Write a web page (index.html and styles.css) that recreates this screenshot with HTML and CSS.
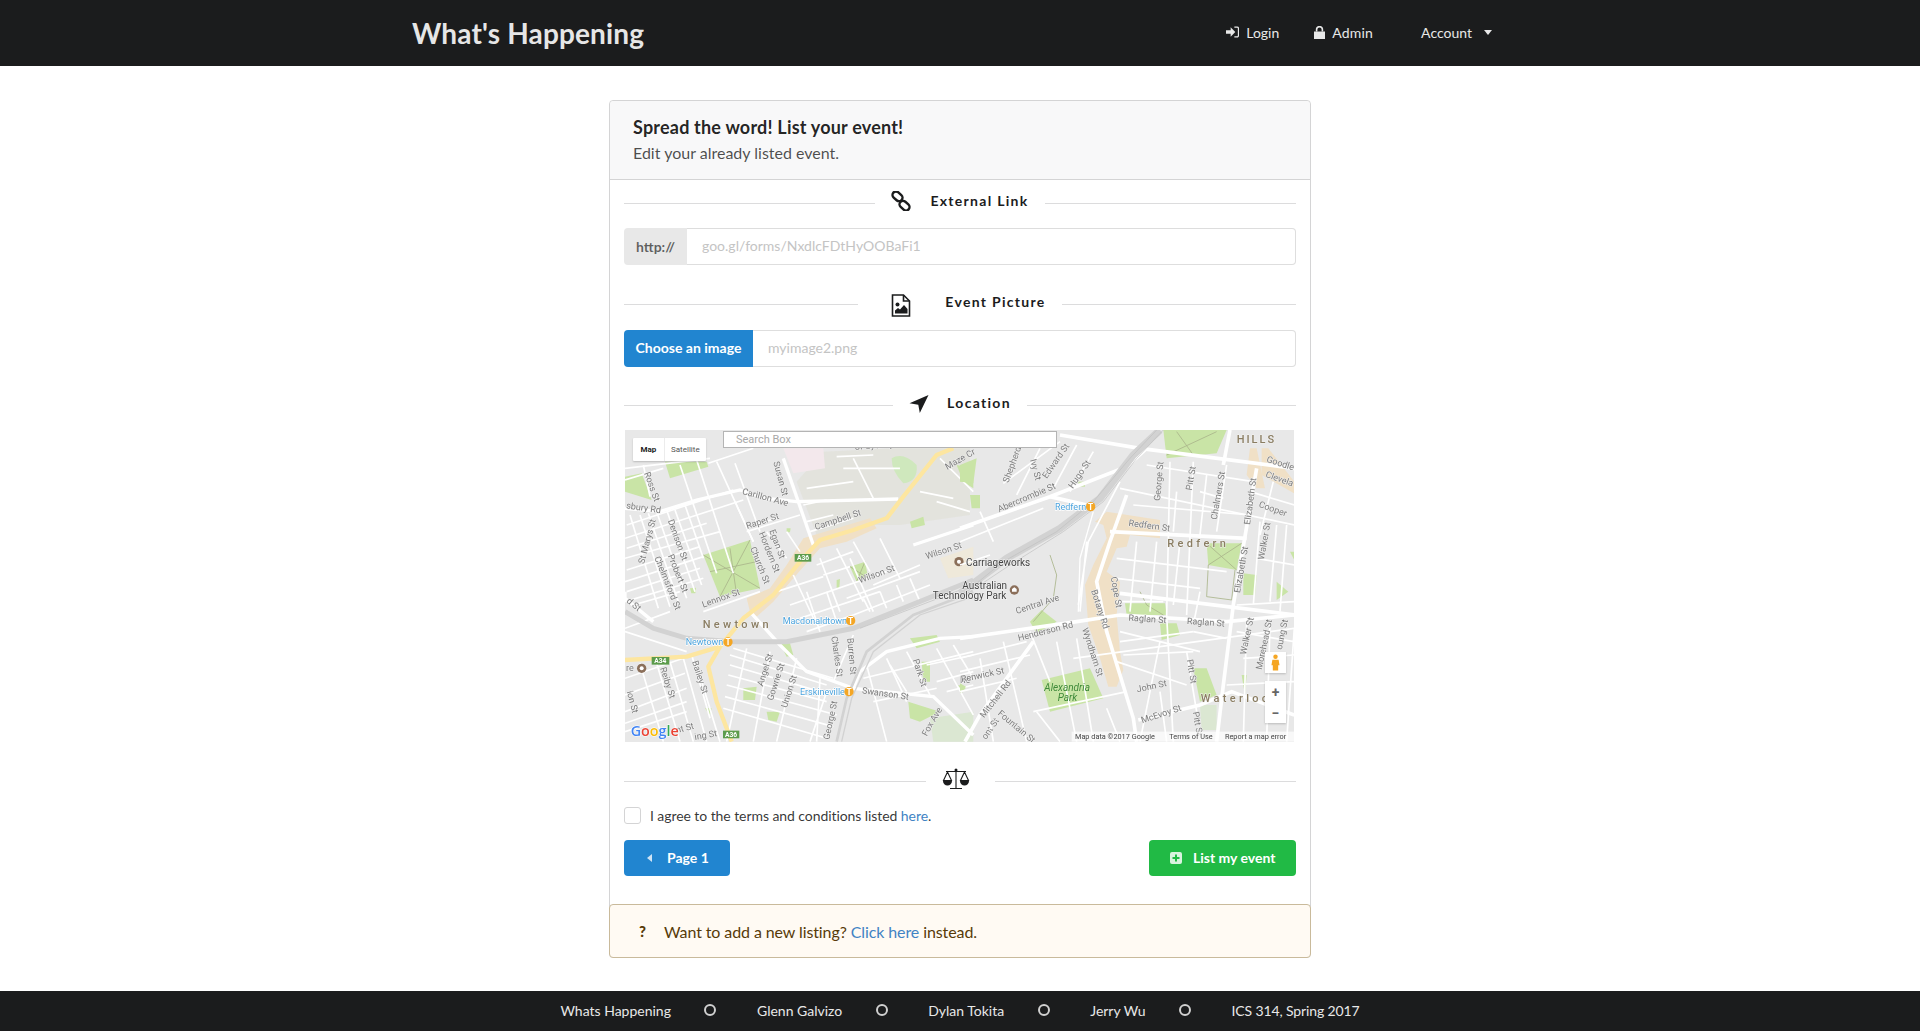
FILE: index.html
```html
<!DOCTYPE html>
<html lang="en">
<head>
    <meta charset="UTF-8">
    <title>What's Happening</title>
    <link rel="stylesheet" href="styles.css">
</head>
<body>
<header class="topbar">
    <a class="brand">What's Happening</a>
    <nav class="topnav">
        <a class="nav-item nav-login">
            <svg class="nav-icon" viewBox="0 0 14 12"><path d="M0 4h5V1l5 5-5 5V8H0z"/><path d="M9 .7h3a1.4 1.4 0 0 1 1.4 1.4v7.8A1.4 1.4 0 0 1 12 11.3H9" fill="none" stroke="currentColor" stroke-width="1.3"/></svg>
            Login
        </a>
        <a class="nav-item nav-admin">
            <svg class="nav-icon lock" viewBox="0 0 11 13"><path d="M0 5.5h11V13H0z"/><path d="M2.6 5.5V3.6a2.9 2.9 0 0 1 5.8 0v1.9" fill="none" stroke="currentColor" stroke-width="1.6"/></svg>
            Admin
        </a>
        <a class="nav-item nav-account">
            Account
            <span class="caret"></span>
        </a>
    </nav>
</header>

<main class="page">
    <section class="card">
        <div class="card-head">
            <h3>Spread the word! List your event!</h3>
            <p>Edit your already listed event.</p>
        </div>
        <form class="card-body">
            <div class="divider">
                <span class="divider-label">
                    <svg class="div-icon" viewBox="0 0 20 20"><g fill="none" stroke="#1b1c1d" stroke-width="2.400"><rect x="1" y="1.800" width="11" height="7" rx="3.500" transform="rotate(42 6.500 5.300)"/><rect x="8" y="11.200" width="11" height="7" rx="3.500" transform="rotate(42 13.500 14.700)"/></g></svg>
                    External Link
                </span>
            </div>
            <div class="field-row">
                <span class="field-tag">http://</span>
                <input class="field-input" type="text" placeholder="goo.gl/forms/NxdlcFDtHyOOBaFi1">
            </div>

            <div class="divider divider-picture">
                <span class="divider-label">
                    <svg class="div-icon" viewBox="0 0 19 23"><path d="M1 1h11l6 6v15H1z" fill="#fff" stroke="#1b1c1d" stroke-width="1.6"/><path d="M12 1v6h6" fill="none" stroke="#1b1c1d" stroke-width="1.6"/><circle cx="6" cy="10.500" r="2"/><path d="M3.500 19.500v-3l3-2.500 2 1.500 4-4.500 3.500 4v4.500z"/></svg>
                    Event Picture
                </span>
            </div>
            <div class="field-row field-row-image">
                <button class="file-btn" type="button">Choose an image</button>
                <input class="field-input" type="text" placeholder="myimage2.png">
            </div>

            <div class="divider divider-location">
                <span class="divider-label">
                    <svg class="div-icon" viewBox="0 0 20 20"><path d="M19.500 1 10.800 19 9.300 10.800 .5 9.300z"/></svg>
                    Location
                </span>
            </div>
            <div class="map">
                <svg class="map-canvas" viewBox="0 0 669 312">
                    <rect width="669" height="312" fill="#e8e8e8"/>

                    <!-- west half -->
                    <g transform="translate(-5 -5) scale(.3333)">
                        <g fill="#e3e3dd">
                            <path d="M530 170 610 80 820 70 1050 70V270L840 300 700 300 590 330z"/>
                        </g>
                        <path d="M490 70H610L615 130 520 145z" fill="#f3e8ec"/>
                        <path d="M960 400 1060 365V450L985 460z" fill="#efe9da"/>
                        <path d="M930 880 1060 860V950H940z" fill="#dbe7d2"/>
                        <path d="M815 100Q850 80 890 120 895 170 850 175 815 140 815 100z" fill="#cfe8bd"/>
                        <g fill="#c9e4a6">
                            <path d="M135 110H260L265 125 150 160z"/>
                            <path d="M15 155 65 145 95 225 15 200z"/>
                            <path d="M250 390 390 345 420 490 300 515z"/>
                            <path d="M690 425 735 410 745 460 710 470z"/>
                            <path d="M1010 120 1060 130V190L1030 170z"/>
                            <path d="M870 290 910 275 915 300 875 310z"/>
                            <path d="M370 790 410 785 405 825 370 825z"/>
                            <path d="M865 830 960 860 900 890 870 880z"/>
                            <path d="M440 860H480L470 890 445 885z"/>
                            <path d="M255 850H275L270 870z"/>
                            <path d="M870 640 950 630 960 650 890 670z"/>
                            <path d="M480 655H510L520 690 500 695z"/>
                            <path d="M905 710H930V770H910z"/>
                            <path d="M650 465 660 462 658 490 650 488z"/>
                            <path d="M210 490 228 488 226 505 214 505z"/>
                            <path d="M500 310 512 310 510 322 500 322z"/>
                            <path d="M1015 780 1040 785 1025 805z"/>
                        </g>
                        <g fill="none" stroke="#a9b58a" stroke-width="2.500">
                            <path d="M250 390 420 490M300 515 390 345M270 440 410 410M330 370 350 510"/>
                            <path d="M690 425 745 460M710 470 735 410"/>
                        </g>
                        <path d="M380 520 450 490 500 420 550 340 750 280 770 310 680 350 600 370 520 460 460 530 410 575 390 560z" fill="#f0e0c6"/>

                        <g fill="none" stroke="#fff" stroke-width="5">
                            <path d="M130 130 15 165M270 100 15 130M265 115 400 70M90 215 70 120M180 120 290 445M230 105 340 445M290 110 400 350M345 115 420 320"/>
                            <path d="M15 340 370 225M15 400 300 320M15 470 250 395M15 530 250 460M40 540 180 500M250 560 420 500"/>
                            <path d="M60 270 150 545M110 260 200 520M165 255 245 480M345 230 400 350M400 300 470 280M380 320 540 270"/>
                            <path d="M20 300 340 195M20 370 260 295M20 435 240 365M20 500 240 430M30 270 115 550M85 265 175 530M140 255 225 500M195 240 250 400"/>
                            <path d="M440 320 500 400M500 320 540 380M550 240 620 225M560 290 640 270M570 320 700 280"/>
                            <path d="M510 540 800 440M470 500 610 455M610 450 690 425M680 520 900 440M700 570 930 480M730 520 750 560M780 500 800 550M830 480 850 530"/>
                            <path d="M540 580 780 500M560 620 700 570M760 480 900 420M870 460 900 530M620 500 650 590M560 500 600 620M690 400 760 560"/>
                            <path d="M520 450 590 600M600 400 660 560M650 370 730 530M700 350 750 440M780 340 840 460M590 420 700 380"/>
                            <path d="M15 610 150 560M15 760 190 700M15 860 200 790M15 920 200 860M190 700 260 950M110 715 180 950M340 670 640 760M330 720 600 800M320 780 650 870M310 850 620 940"/>
                            <path d="M60 715 130 950M150 710 220 950M230 720 300 950M15 810 195 745M15 895 200 830M330 690 620 780M325 750 620 830M315 815 640 905"/>
                            <path d="M380 670 320 950M450 680 400 950M530 700 470 950M600 760 590 950M620 800 570 950M700 630 640 770"/>
                            <path d="M730 760 1060 680M760 830 950 790M860 680 930 810M950 670 1060 870M1000 660 1060 760M810 720 860 800"/>
                            <path d="M740 720 800 950M800 700 860 830M920 720 1060 690M950 770 1060 740M980 800 1060 780"/>
                            <path d="M670 130 840 130M560 190 700 170M700 100 760 220M900 200 1000 220M650 95 760 90M960 100 1060 200M950 230 1050 260"/>
                            <path d="M15 620 200 680M215 690 270 880"/>
                        </g>
                        <g fill="none" stroke="#fff" stroke-width="10">
                            <path d="M835 222 530 230 440 220 360 195 230 225 120 260 15 250"/>
                            <path d="M490 100 580 360"/>
                            <path d="M390 560 480 660 560 740 700 790 940 815 1060 930"/>
                            <path d="M1060 635 960 640 800 680 720 740 700 790"/>
                            <path d="M880 360 1060 300"/>
                            <path d="M15 500 15 520 100 590"/>
                        </g>
                        <g fill="none" stroke="#d2d2d2">
                            <path d="M15 560 100 610 200 640 340 650 500 650 700 610 1060 465" stroke-width="15"/>
                            <path d="M650 950 680 820 740 680 880 570 1060 500" stroke-width="8"/>
                            <path d="M665 950 695 820 760 680 900 570 1060 515" stroke-width="4"/>
                            <path d="M720 610 1060 480" stroke="#c0c0c0" stroke-width="2"/>
                        </g>
                        <g fill="none" stroke="#fde6a0" stroke-width="13" stroke-linejoin="round">
                            <path d="M1000 70 950 90 850 215 800 280 700 315 600 345 540 410 460 510 370 580 300 665 200 695 15 705"/>
                            <path d="M300 665 265 725 290 830 335 950"/>
                        </g>

                        <g class="st">
                            <text transform="translate(72 145) rotate(70)">Ross St</text>
                            <text transform="translate(365 207) rotate(15)">Carillon Ave</text>
                            <text transform="translate(460 112) rotate(75)">Susan St</text>
                            <text transform="translate(18 250) rotate(8)">sbury Rd</text>
                            <text transform="translate(72 418) rotate(-75)">St Marys St</text>
                            <text transform="translate(143 287) rotate(70)">Denison St</text>
                            <text transform="translate(143 392) rotate(68)">Probert St</text>
                            <text transform="translate(103 398) rotate(68)">Chelmsford St</text>
                            <text transform="translate(382 312) rotate(-18)">Raper St</text>
                            <text transform="translate(416 325) rotate(68)">Hordern St</text>
                            <text transform="translate(448 317) rotate(70)">Egan St</text>
                            <text transform="translate(390 370) rotate(68)">Church St</text>
                            <text transform="translate(587 315) rotate(-18)">Campbell St</text>
                            <text transform="translate(720 475) rotate(-20)">Wilson St</text>
                            <text transform="translate(920 403) rotate(-18)">Wilson St</text>
                            <text transform="translate(250 548) rotate(-20)">Lennox St</text>
                            <text transform="translate(725 805) rotate(8)">Swanson St</text>
                            <text transform="translate(120 730) rotate(72)">Reiby St</text>
                            <text transform="translate(216 710) rotate(72)">Bailey St</text>
                            <text transform="translate(428 785) rotate(-72)">Angel St</text>
                            <text transform="translate(458 828) rotate(-72)">Gowrie St</text>
                            <text transform="translate(500 850) rotate(-72)">Union St</text>
                            <text transform="translate(634 635) rotate(82)">Charles St</text>
                            <text transform="translate(682 640) rotate(85)">Burren St</text>
                            <text transform="translate(628 945) rotate(-78)">George St</text>
                            <text transform="translate(878 705) rotate(72)">Park St</text>
                            <text transform="translate(920 935) rotate(-60)">Fox Ave</text>
                            <text transform="translate(982 135) rotate(-30)">Maze Cr</text>
                            <text transform="translate(18 530) rotate(40)">d St</text>
                            <text transform="translate(20 800) rotate(75)">ion St</text>
                            <text transform="translate(170 925) rotate(-15)">nt St</text>
                            <text transform="translate(225 945) rotate(-10)">ing St</text>
                            <text transform="translate(705 75) rotate(-5)">of Sydney</text>
                            <text transform="translate(1020 775)">Re</text>
                            <text x="18" y="738" class="poi-text">re</text>
                        </g>
                        <text x="248" y="608" class="area">Newtown</text>
                        <text x="488" y="596" class="station">Macdonaldtown</text>
                        <text x="197" y="660" class="station">Newtown</text>
                        <text x="540" y="809" class="station">Erskineville</text>
                        <g class="tstop"><circle cx="692" cy="587" r="14"/><text x="692" y="596">T</text></g>
                        <g class="tstop"><circle cx="324" cy="651" r="14"/><text x="324" y="660">T</text></g>
                        <g class="tstop"><circle cx="687" cy="800" r="14"/><text x="687" y="809">T</text></g>
                        <g class="shield"><rect x="524" y="387" width="50" height="23"/><text x="549" y="405">A36</text></g>
                        <g class="shield"><rect x="95" y="696" width="53" height="23"/><text x="121" y="714">A34</text></g>
                        <g class="shield"><rect x="309" y="917" width="49" height="23"/><text x="333" y="935">A36</text></g>
                        <circle cx="65" cy="730" r="14" fill="#8b6f5a"/><circle cx="65" cy="730" r="6" fill="#fff"/>
                        <circle cx="1017" cy="410" r="14" fill="#8b6f5a"/><circle cx="1017" cy="410" r="6" fill="#fff"/>
                        <text x="32" y="933" class="glogo"><tspan fill="#4285f4">G</tspan><tspan fill="#ea4335">o</tspan><tspan fill="#fbbc05">o</tspan><tspan fill="#4285f4">g</tspan><tspan fill="#34a853">l</tspan><tspan fill="#ea4335">e</tspan></text>
                    </g>

                    <!-- east half -->
                    <g transform="translate(335 -5) scale(.3333)">
                        <path d="M720 840H770V915H725z" fill="#dbe7d2"/>
                        <g fill="#c9e4a6">
                            <path d="M610 15H800L770 85 620 100z"/>
                            <path d="M740 355H845L830 435 745 420z"/>
                            <path d="M850 445 890 450 885 510H850z"/>
                            <path d="M495 535H615L620 570 500 570z"/>
                            <path d="M600 595H650L660 630 605 645z"/>
                            <path d="M245 765 390 730 430 820 270 860z"/>
                            <path d="M210 590 245 555 290 590 230 625z"/>
                            <path d="M700 730H740L770 810 720 830z"/>
                            <path d="M950 470 985 500 950 525z"/>
                            <path d="M990 380H1003V405z"/>
                            <path d="M845 750H860L855 810z"/>
                            <path d="M30 210H60V250H35z"/>
                            <path d="M0 120 50 100 40 175 0 170z"/>
                            <path d="M0 775 18 785 0 805z"/>
                            <path d="M355 170H375V185H355z"/>
                        </g>
                        <g fill="none" stroke="#a9b58a" stroke-width="2.500">
                            <path d="M740 355 830 435M845 355 745 420M745 420 740 515 815 525 825 435"/>
                            <path d="M620 90 770 20M650 20 700 90M270 390 290 450 280 520 220 590"/>
                            <path d="M540 500 560 540 610 570"/>
                        </g>
                        <g fill="#f0e0c6">
                            <path d="M405 290 440 260 600 285 600 340 510 330 500 365 470 370 440 440 480 470 470 570 480 680 490 735 470 785 445 785 420 700 385 600 375 480 400 420 440 340 430 300z"/>
                            <path d="M870 70H890L915 190H890L860 150z"/>
                            <path d="M905 70H925L1003 170V205L905 150z"/>
                        </g>
                        <g fill="none" stroke="#fff" stroke-width="5">
                            <path d="M300 50 130 175M240 70 170 210M350 60 280 190M400 80 330 200"/>
                            <path d="M0 350 250 250M0 420 90 390M60 260 100 350"/>
                            <path d="M630 110 620 570 640 950M700 110 680 570M800 120 770 320M870 200 1003 240M560 120 880 170M480 190 1003 300"/>
                            <path d="M520 240 870 270M650 200 640 320M740 150 720 330M940 170 900 330M980 300 960 560M470 530 610 530"/>
                            <path d="M470 400 800 440M470 460 720 490M480 620 720 680M490 690 700 680M700 620 800 640M470 710 680 780M340 700 1003 610"/>
                            <path d="M530 350 510 560M590 350 570 560M660 350 640 540M720 500 700 600M480 650 700 620"/>
                            <path d="M0 700 200 650M0 800 170 760M130 650 200 950M290 650 350 950M350 640 400 950M60 700 100 950M220 860 500 800"/>
                            <path d="M0 740 210 690M210 620 270 770M230 860 300 950M440 850 480 950M600 800 620 950M680 680 710 860"/>
                            <path d="M860 590 850 950M930 600 920 950M1003 610 980 950M830 620 1003 650M850 700 1003 690M800 780 1003 770M540 950 600 650M380 350 360 560M355 540 385 350 480 170"/>
                            <path d="M720 200 790 220M950 300 930 530M900 290 880 540M890 400 1003 420M830 540 1003 530"/>
                        </g>
                        <g fill="none" stroke="#fff" stroke-width="11">
                            <path d="M300 30 540 70 1003 130"/>
                            <path d="M0 310 270 215 500 125 560 70"/>
                            <path d="M270 215 400 245"/>
                            <path d="M500 210 450 350 410 470 440 620 520 880 530 950"/>
                            <path d="M890 130 820 540 790 780 770 950"/>
                            <path d="M0 640 350 590 480 570 800 590 1003 570"/>
                            <path d="M220 650 60 870 15 950"/>
                            <path d="M480 505 1003 570"/>
                            <path d="M535 885 720 840 815 800 1003 870"/>
                            <path d="M450 320 860 340"/>
                            <path d="M810 15 790 120"/>
                        </g>
                        <g fill="none" stroke="#d2d2d2">
                            <path d="M600 15 520 90 420 220 300 310 140 400 0 505" stroke-width="22"/>
                            <path d="M590 15 510 100 400 230 290 320 130 410 0 515" stroke="#c0c0c0" stroke-width="2"/>
                            <path d="M610 15 530 100 430 230 310 320 150 420 0 520" stroke="#c0c0c0" stroke-width="2"/>
                            <path d="M400 260 360 400 355 560" stroke="#fff" stroke-width="4"/>
                        </g>
                        <g class="st">
                            <text transform="translate(918 110) rotate(18)">Goodle</text>
                            <text transform="translate(915 155) rotate(20)">Clevela</text>
                            <text transform="translate(895 245) rotate(20)">Cooper</text>
                            <text transform="translate(870 300) rotate(-82)">Elizabeth St</text>
                            <text transform="translate(770 285) rotate(-80)">Chalmers St</text>
                            <text transform="translate(695 197) rotate(-80)">Pitt St</text>
                            <text transform="translate(600 228) rotate(-85)">George St</text>
                            <text transform="translate(145 175) rotate(-70)">Shepherd</text>
                            <text transform="translate(210 105) rotate(75)">Ivy St</text>
                            <text transform="translate(260 162) rotate(-55)">Edward St</text>
                            <text transform="translate(338 192) rotate(-55)">Hugo St</text>
                            <text transform="translate(118 262) rotate(-23)">Abercrombie St</text>
                            <text transform="translate(505 302) rotate(8)">Redfern St</text>
                            <text transform="translate(912 405) rotate(-80)">Walker St</text>
                            <text transform="translate(840 505) rotate(-80)">Elizabeth St</text>
                            <text transform="translate(452 457) rotate(80)">Cope St</text>
                            <text transform="translate(393 497) rotate(72)">Botany Rd</text>
                            <text transform="translate(366 612) rotate(72)">Wyndham St</text>
                            <text transform="translate(170 567) rotate(-18)">Central Ave</text>
                            <text transform="translate(176 648) rotate(-14)">Henderson Rd</text>
                            <text transform="translate(505 587) rotate(4)">Raglan St</text>
                            <text transform="translate(680 597) rotate(4)">Raglan St</text>
                            <text transform="translate(858 690) rotate(-78)">Walker St</text>
                            <text transform="translate(905 735) rotate(-78)">Morehead St</text>
                            <text transform="translate(965 675) rotate(-78)">oung St</text>
                            <text transform="translate(680 705) rotate(80)">Pitt St</text>
                            <text transform="translate(698 862) rotate(80)">Pitt St</text>
                            <text transform="translate(5 772) rotate(-12)">Renwick St</text>
                            <text transform="translate(72 880) rotate(-52)">Mitchell Rd</text>
                            <text transform="translate(112 868) rotate(40)">Fountain St</text>
                            <text transform="translate(78 945) rotate(-55)">ont St</text>
                            <text transform="translate(532 802) rotate(-12)">John St</text>
                            <text transform="translate(547 895) rotate(-18)">McEvoy St</text>
                        </g>
                        <text x="830" y="53" class="area area-small">HILLS</text>
                        <text x="622" y="367" class="area">Redfern</text>
                        <text x="722" y="831" class="area">Waterloo</text>
                        <text x="285" y="254" class="station">Redfern</text>
                        <g class="tstop"><circle cx="392" cy="245" r="14"/><text x="392" y="254">T</text></g>
                        <text x="18" y="422" class="poi">Carriageworks</text>
                        <text x="7" y="492" class="poi">Australian</text>
                        <text x="-82" y="523" class="poi">Technology Park</text>
                        <circle cx="163" cy="495" r="14" fill="#8b6f5a"/><path d="M156 500v-8l7-5 7 5v8z" fill="#fff"/>
                        <text x="253" y="798" class="park">Alexandria</text>
                        <text x="293" y="828" class="park">Park</text>
                        <rect x="335" y="920" width="668" height="30" fill="#fff" opacity=".7"/>
                        <g class="attr">
                            <text x="345" y="941">Map data ©2017 Google</text>
                            <text x="628" y="941">Terms of Use</text>
                            <text x="795" y="941">Report a map error</text>
                        </g>
                    </g>
                </svg>
                <input class="map-search" type="text" placeholder="Search Box">
                <div class="map-type">
                    <span class="map-type-on">Map</span>
                    <span>Satellite</span>
                </div>
                <div class="pegman">
                    <svg viewBox="0 0 10 19" width="9" height="17"><circle cx="5" cy="3" r="2.500" fill="#f5a623"/><path d="M1.500 6.500h7l1 6H8v6H2v-6H.5z" fill="#f5a623"/></svg>
                </div>
                <div class="zoom-ctl">
                    <span>+</span>
                    <span>−</span>
                </div>
            </div>

            <div class="divider divider-terms">
                <span class="divider-label">
                    <svg class="div-icon" viewBox="0 0 28 22"><g fill="none" stroke="#1b1c1d" stroke-width="1.100"><path d="M14 2.500V20M8 20.500h12M4 3.500h20"/><path d="M5.500 4 1.500 12.500h8zM22.500 4l-4 8.500h8z"/></g><circle cx="14" cy="2" r="1.500" fill="#1b1c1d"/><path d="M1 13h9a4.500 4.500 0 0 1-9 0zM18 13h9a4.500 4.500 0 0 1-9 0z" fill="#1b1c1d"/></svg>
                </span>
            </div>
            <label class="terms">
                <span class="check-box"></span>
                <span>I agree to the terms and conditions listed <a class="link">here</a>.</span>
            </label>
            <div class="actions">
                <button class="btn btn-blue" type="button"><span class="caret-left"></span>Page 1</button>
                <button class="btn btn-green" type="button">
                    <svg class="plus-icon" viewBox="0 0 12 12"><path fill-rule="evenodd" d="M2 0h8a2 2 0 0 1 2 2v8a2 2 0 0 1-2 2H2a2 2 0 0 1-2-2V2a2 2 0 0 1 2-2zM5 2.500V5H2.500v2H5v2.500h2V7h2.500V5H7V2.500z"/></svg>
                    List my event
                </button>
            </div>
        </form>
        <div class="notice">
            <span class="notice-mark">?</span>
            <span>Want to add a new listing? <a class="link">Click here</a> instead.</span>
        </div>
    </section>
</main>

<footer class="foot">
    <span>Whats Happening</span>
    <i class="ring"></i>
    <span>Glenn Galvizo</span>
    <i class="ring"></i>
    <span>Dylan Tokita</span>
    <i class="ring"></i>
    <span>Jerry Wu</span>
    <i class="ring"></i>
    <span class="foot-last">ICS 314, Spring 2017</span>
</footer>
</body>
</html>
```

FILE: styles.css
```css
/* page */
body {
    margin: 0;
    font-family: Lato, "Liberation Sans", sans-serif;
    font-size: 14px;
    color: rgba(0, 0, 0, .87);
    background: #fff;
    height: 1031px;
    display: flex;
    flex-direction: column;
    overflow: hidden;
}

/* top bar */
.topbar {
    height: 66px;
    background: #1b1c1d;
    display: flex;
    align-items: center;
    padding-left: 412px;
    flex: none;
}

.brand {
    font-size: 28px;
    font-weight: 700;
    letter-spacing: .15px;
    color: #e6e6e6;
}

.topnav {
    display: flex;
    align-items: center;
    margin-left: auto;
    padding: 0 428px 2px 0;
    color: #e8e8e8;
}

.nav-item {
    display: flex;
    align-items: center;
}

.nav-login { margin-right: 35px; }
.nav-admin { margin-right: 48px; letter-spacing: .2px; }

.nav-icon {
    width: 13px;
    height: 12px;
    fill: currentColor;
    margin-right: 7px;
}

.nav-icon.lock {
    width: 11px;
    height: 13px;
}

.caret {
    width: 0;
    height: 0;
    border-left: 4.5px solid transparent;
    border-right: 4.5px solid transparent;
    border-top: 5px solid #e8e8e8;
    margin-left: 12px;
}

/* card */
.page {
    flex: 1;
    padding-top: 34px;
}

.card {
    width: 700px;
    margin: 0 auto;
    border: 1px solid #d4d4d5;
    border-radius: 4px;
}

.card-head {
    height: 79px;
    box-sizing: border-box;
    padding: 14px 23px 0;
    background: #f8f8f9;
    border-bottom: 1px solid #d4d4d5;
    border-radius: 4px 4px 0 0;
}

.card-head h3 {
    margin: 0;
    font-size: 18px;
    line-height: 25px;
    font-weight: 700;
    letter-spacing: .2px;
}

.card-head p {
    margin: 2px 0 0;
    font-size: 16px;
    line-height: 22px;
    color: rgba(0, 0, 0, .7);
}

.card-body {
    padding: 8px 14px 0;
}

/* dividers */
.divider {
    display: flex;
    align-items: center;
    height: 24px;
    font-weight: 700;
    letter-spacing: 1.3px;
}

.divider::before,
.divider::after {
    content: "";
    flex: 1;
    height: 0;
    border-top: 1px solid #dcdcdd;
    margin-top: 6px;
}

.divider-label {
    display: flex;
    align-items: center;
    padding: 0 16px;
    color: #1b1c1d;
}

.div-icon {
    width: 20px;
    height: 20px;
    margin-right: 19px;
    fill: #1b1c1d;
    transform: translateY(1px);
}

.divider-picture {
    margin-top: 24px;
}

.divider-picture .div-icon {
    height: 23px;
    margin: 0 34px 0 17px;
    transform: translateY(4px);
}

.divider-location {
    margin-top: 23px;
}

.divider-location .div-icon {
    margin-right: 18px;
    transform: translateY(2px);
}

.divider-terms {
    margin-top: 24px;
}

.divider-terms .div-icon {
    width: 28px;
    height: 22px;
    margin: 0 9px 0 0;
    transform: translateY(1px);
}

/* inputs */
.field-row {
    display: flex;
    height: 37px;
    margin-top: 16px;
}

.field-row-image {
    margin-top: 17px;
}

.field-tag {
    width: 63px;
    display: flex;
    align-items: center;
    justify-content: center;
    background: #e8e8e8;
    color: rgba(0, 0, 0, .6);
    font-weight: 700;
    border-radius: 4px 0 0 4px;
}

.field-input {
    flex: 1;
    min-width: 0;
    padding: 0 15px 2px;
    border: 1px solid rgba(34, 36, 38, .15);
    border-left: none;
    border-radius: 0 4px 4px 0;
    font: 14px Lato, sans-serif;
}

.field-input::placeholder {
    color: #c4c4c4;
    opacity: 1;
}

.file-btn {
    width: 129px;
    border: none;
    background: #2185d0;
    color: #fff;
    font: 700 14px Lato, sans-serif;
    border-radius: 4px 0 0 4px;
    padding: 0 0 2px;
}

/* map */
.map {
    position: relative;
    width: 669px;
    height: 312px;
    margin: 16px 0 0 1px;
    overflow: hidden;
}

.map-canvas {
    display: block;
    width: 669px;
    height: 312px;
    filter: blur(.45px);
}

.st text {
    font: 27px Roboto, sans-serif;
    fill: #7d7d7d;
    stroke: #f0f0f0;
    stroke-width: 3px;
    paint-order: stroke;
}

.area {
    font: 500 33px Roboto, sans-serif;
    letter-spacing: 10px;
    fill: #8a7d62;
    stroke: #f2f2f2;
    stroke-width: 3px;
    paint-order: stroke;
}

.area-small {
    letter-spacing: 6px;
}

.station {
    font: 27px Roboto, sans-serif;
    fill: #4ba3dd;
    stroke: #fff;
    stroke-width: 4px;
    paint-order: stroke;
}

.tstop circle {
    fill: #f4a625;
}

.tstop text {
    font: 700 25px Roboto, sans-serif;
    fill: #fff;
    text-anchor: middle;
}

.shield rect {
    fill: #5c9c4c;
}

.shield text {
    font: 700 20px Roboto, sans-serif;
    fill: #fff;
    text-anchor: middle;
}

.poi {
    font: 30px Roboto, sans-serif;
    fill: #444;
    stroke: #f2f2f2;
    stroke-width: 3px;
    paint-order: stroke;
}

.park {
    font: italic 30px Roboto, sans-serif;
    fill: #3f8a3a;
}

.attr text {
    font: 22px Roboto, sans-serif;
    fill: #444;
}

.glogo {
    font: 600 43px "Open Sans", sans-serif;
    stroke: #fff;
    stroke-width: 3px;
    paint-order: stroke;
}

.map-search {
    position: absolute;
    left: 98px;
    top: 1px;
    width: 334px;
    height: 17px;
    box-sizing: border-box;
    padding: 0 12px;
    background: #fff;
    border: 1px solid #b4b4b4;
    font: 11px Roboto, sans-serif;
}

.map-search::placeholder {
    color: #a8a8a8;
    opacity: 1;
}

.map-type {
    position: absolute;
    left: 8px;
    top: 8px;
    width: 73px;
    height: 23px;
    display: flex;
    background: #fff;
    font: 8px Roboto, sans-serif;
    color: #565656;
    box-shadow: 0 1px 2px rgba(0, 0, 0, .2);
    border-radius: 1px;
}

.map-type span {
    flex: 1;
    display: flex;
    align-items: center;
    justify-content: center;
}

.map-type span + span {
    flex: 1.35;
    border-left: 1px solid #ececec;
}

.map-type-on {
    font-weight: 700;
    color: #222;
}

.pegman {
    position: absolute;
    left: 640px;
    top: 222px;
    width: 21px;
    height: 21px;
    background: #fff;
    display: flex;
    align-items: center;
    justify-content: center;
    box-shadow: 0 1px 2px rgba(0, 0, 0, .2);
}

.zoom-ctl {
    position: absolute;
    left: 640px;
    top: 251px;
    width: 21px;
    height: 42px;
    background: #fff;
    box-shadow: 0 1px 2px rgba(0, 0, 0, .2);
    display: flex;
    flex-direction: column;
}

.zoom-ctl span {
    flex: 1;
    display: flex;
    align-items: center;
    justify-content: center;
    font: 700 14px Roboto, sans-serif;
    color: #666;
}

/* terms and buttons */
.terms {
    display: flex;
    align-items: center;
    height: 17px;
    margin-top: 17px;
    color: rgba(0, 0, 0, .8);
    letter-spacing: -.07px;
}

.check-box {
    width: 15px;
    height: 15px;
    border: 1px solid #d4d4d5;
    border-radius: 3px;
    margin-right: 9px;
}

.link {
    color: #4183c4;
}

.actions {
    display: flex;
    justify-content: space-between;
    margin-top: 16px;
}

.btn {
    height: 36px;
    border: none;
    border-radius: 4px;
    color: #fff;
    font: 700 14px Lato, sans-serif;
    display: flex;
    align-items: center;
    padding: 0 0 1px;
}

.btn-blue {
    width: 106px;
    background: #2185d0;
    padding-left: 23px;
}

.btn-green {
    width: 147px;
    background: #21ba45;
    padding-left: 21px;
}

.caret-left {
    width: 0;
    height: 0;
    border-top: 4.5px solid transparent;
    border-bottom: 4.5px solid transparent;
    border-right: 5px solid #cfe4f5;
    margin-right: 15px;
}

.plus-icon {
    width: 12px;
    height: 12px;
    fill: #d9f3df;
    margin-right: 11px;
}

/* message */
.notice {
    height: 54px;
    margin: 28px -1px -1px;
    box-sizing: border-box;
    border: 1px solid #c9ba9b;
    border-radius: 4px;
    background: #fffaf3;
    color: #573a08;
    display: flex;
    align-items: center;
    padding-left: 29px;
    font-size: 16px;
    letter-spacing: -.1px;
}

.notice-mark {
    width: 25px;
    font-weight: 900;
    font-size: 15px;
}

/* footer */
.foot {
    height: 40px;
    box-sizing: border-box;
    padding-bottom: 2px;
    flex: none;
    background: #1b1c1d;
    color: #e8e8e8;
    display: flex;
    align-items: center;
    justify-content: center;
    gap: 33.5px;
}

.foot-last {
    letter-spacing: -.12px;
}

.ring {
    width: 8px;
    height: 8px;
    border: 2px solid #d0d0d0;
    border-radius: 50%;
    margin-right: 7px;
}
```
